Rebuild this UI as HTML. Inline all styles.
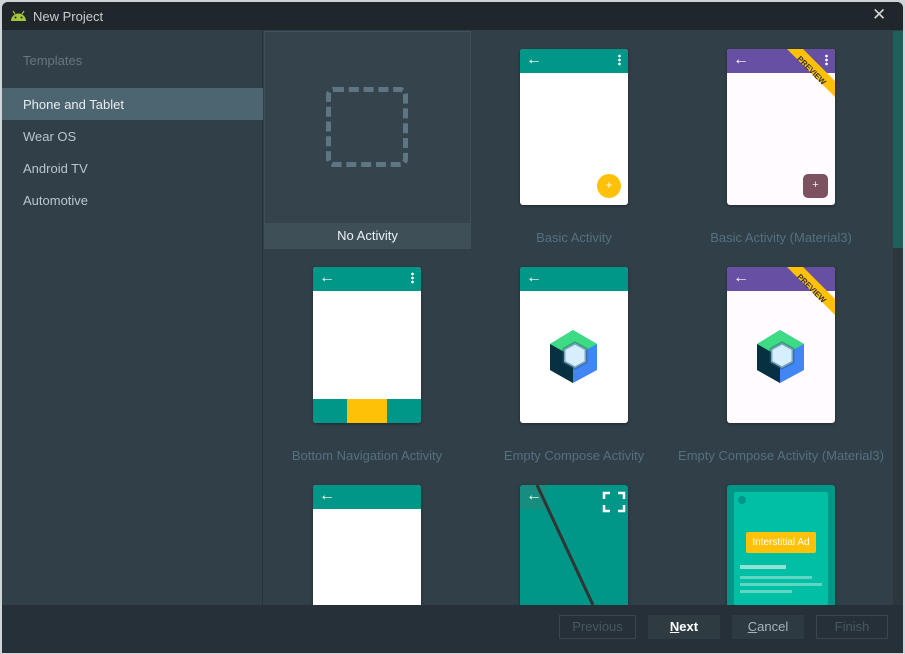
<!DOCTYPE html>
<html><head><meta charset="utf-8"><style>
*{margin:0;padding:0;box-sizing:border-box}
body{width:905px;height:654px;background:#cfd4d8;font-family:"Liberation Sans","DejaVu Sans",sans-serif;overflow:hidden;position:relative}
.win{position:absolute;left:2px;top:2px;width:901px;height:651px;background:#313f48;border-radius:6px 6px 0 0;overflow:hidden}
.title{position:absolute;left:0;top:0;width:901px;height:28px;background:#1f262c;color:#c8cdd1;font-size:13px}
.a{position:absolute}
.left{position:absolute;left:0;top:28px;width:261px;height:575px;background:#313f48;border-right:1px solid #27333a}
.item{position:absolute;left:21px;font-size:13px;color:#bcc6cc}
.sel{position:absolute;left:0;top:58px;width:261px;height:32px;background:#4d6571}
.card{position:absolute;width:108px;height:156px;background:#fff;border-radius:3px;overflow:hidden;box-shadow:0 1px 3px rgba(0,0,0,.35)}
.hdr{position:absolute;left:0;top:0;width:108px;height:24px;background:#009688}
.arr{position:absolute;left:6px;top:2px;color:#fff;font-size:16px;font-weight:bold}
.dots{position:absolute;right:7px;top:5px;width:3px;height:12px;background:radial-gradient(circle,#fff 1.2px,transparent 1.5px) 0 0/3px 4px}
.lbl{position:absolute;font-size:13px;color:#55707f;text-align:center;width:260px;white-space:nowrap}
.btn{position:absolute;top:615px;height:24px;font-size:13px;text-align:center;line-height:22px;border:1px solid #3a464e}
.pv{position:absolute;left:66px;top:17px;font-size:8px;font-weight:bold;color:#333;transform:rotate(45deg)}
</style></head><body>
<div class="win">
 <div class="title">
  <svg class="a" style="left:8px;top:8px" width="17" height="11" viewBox="0 0 17 11"><path d="M1 11 A7.5 7.5 0 0 1 16 11Z" fill="#a4c639"/><path d="M3 1 L5 4 M14 1 L12 4" stroke="#a4c639" stroke-width="1.2"/><circle cx="5.5" cy="7.5" r="1" fill="#1f262c"/><circle cx="11.5" cy="7.5" r="1" fill="#1f262c"/></svg>
  <div class="a" style="left:31px;top:7px">New Project</div>
  <div class="a" style="left:870px;top:3px;font-size:17px;color:#d0d4d8">✕</div>
 </div>
 <div class="left">
  <div class="item" style="top:23px;color:#68767e">Templates</div>
  <div class="sel"></div>
  <div class="item" style="top:67px;color:#e8eef1">Phone and Tablet</div>
  <div class="item" style="top:99px">Wear OS</div>
  <div class="item" style="top:131px">Android TV</div>
  <div class="item" style="top:163px">Automotive</div>
 </div>
 <div class="a" style="left:891px;top:29px;width:10px;height:217px;background:#1d5f5b"></div>
 <div class="a" style="left:891px;top:246px;width:10px;height:357px;background:#2b363d"></div>
 <div class="a" style="left:262px;top:29px;width:207px;height:218px;border:1px solid #3f505a;background:#34434c"></div>
 <div class="a" style="left:263px;top:221px;width:205px;height:25px;background:#3f4f58;color:#eef2f4;font-size:13px;text-align:center;line-height:25px">No Activity</div>
 <div class="a" style="left:324px;top:85px;width:82px;height:80px;border:5px dashed #5e7684;border-radius:8px"></div>
</div>
<div class="card" style="left:520px;top:49px"><div class="hdr"><span class="arr">←</span><span class="dots"></span></div>
 <div class="a" style="left:77px;top:125px;width:24px;height:24px;border-radius:50%;background:#ffc107;color:#fff;font-size:12px;text-align:center;line-height:23px">+</div></div>
<div class="lbl" style="left:444px;top:230px">Basic Activity</div>

<div class="card" style="left:727px;top:49px;background:#fffbfe"><div class="hdr" style="background:#6750a4"><span class="arr">←</span><span class="dots"></span></div>
 <div class="a" style="left:0;top:0;width:108px;height:60px;background:#ffc107;clip-path:polygon(60px 0,76px 0,108px 32px,108px 48px)"></div>
 <div class="pv">PREVIEW</div>
 <div class="a" style="left:76px;top:125px;width:25px;height:24px;border-radius:5px;background:#7d5260;color:#eee;font-size:11px;text-align:center;line-height:23px">+</div></div>
<div class="lbl" style="left:651px;top:230px">Basic Activity (Material3)</div>

<div class="card" style="left:313px;top:267px"><div class="hdr"><span class="arr">←</span><span class="dots"></span></div>
 <div class="a" style="left:0;top:132px;width:108px;height:24px;background:#009688"></div>
 <div class="a" style="left:34px;top:132px;width:40px;height:24px;background:#ffc107"></div></div>
<div class="lbl" style="left:237px;top:448px">Bottom Navigation Activity</div>

<div class="card" style="left:520px;top:267px"><div class="hdr"><span class="arr">←</span></div>
 <svg class="a" style="left:0;top:0" width="108" height="156"><polygon points="53,63 77,77 77,103 53,116 30,103 30,77" fill="#4285f4"/><polygon points="53,63 77,77 53,90 30,77" fill="#3ddc84"/><polygon points="30,77 53,90 53,116 30,103" fill="#073042"/><polygon points="55,76 66,82 66,95 55,101 44,95 44,82" fill="#d6efff" stroke="#2b5d7a" stroke-width="3" stroke-opacity=".5"/></svg></div>
<div class="lbl" style="left:444px;top:448px">Empty Compose Activity</div>

<div class="card" style="left:727px;top:267px;background:#fffbfe"><div class="hdr" style="background:#6750a4"><span class="arr">←</span></div>
 <div class="a" style="left:0;top:0;width:108px;height:60px;background:#ffc107;clip-path:polygon(60px 0,76px 0,108px 32px,108px 48px)"></div>
 <div class="pv">PREVIEW</div>
 <svg class="a" style="left:0;top:0" width="108" height="156"><polygon points="53,63 77,77 77,103 53,116 30,103 30,77" fill="#4285f4"/><polygon points="53,63 77,77 53,90 30,77" fill="#3ddc84"/><polygon points="30,77 53,90 53,116 30,103" fill="#073042"/><polygon points="55,76 66,82 66,95 55,101 44,95 44,82" fill="#d6efff" stroke="#2b5d7a" stroke-width="3" stroke-opacity=".5"/></svg></div>
<div class="lbl" style="left:651px;top:448px">Empty Compose Activity (Material3)</div>

<div class="card" style="left:313px;top:485px;height:120px;border-radius:3px 3px 0 0"><div class="hdr"><span class="arr">←</span></div></div>
<div class="card" style="left:520px;top:485px;height:120px;border-radius:3px 3px 0 0;background:#009688">
 <div class="a" style="left:0;top:0;width:26px;height:24px;background:#178d80"></div><span class="arr">←</span>
 <svg class="a" style="left:0;top:0" width="108" height="120"><line x1="17" y1="0" x2="73" y2="120" stroke="#333" stroke-width="3"/><path d="M84 14V8H90M98 8H104V14M104 20V26H98M90 26H84V20" stroke="#fff" stroke-width="2.5" fill="none"/></svg></div>
<div class="card" style="left:727px;top:485px;height:120px;border-radius:3px 3px 0 0;background:#009688">
 <div class="a" style="left:7px;top:7px;width:94px;height:113px;background:#00bfa5;border-radius:2px"></div>
 <div class="a" style="left:11px;top:11px;width:8px;height:8px;border-radius:50%;background:#009688"></div>
 <div class="a" style="left:19px;top:47px;width:70px;height:21px;background:#ffc107;border-radius:2px;color:#fff;font-size:10px;text-align:center;line-height:21px">Interstitial Ad</div>
 <div class="a" style="left:13px;top:80px;width:46px;height:4px;background:#8fe3d5"></div>
 <div class="a" style="left:13px;top:91px;width:72px;height:3px;background:#5fd6c4"></div>
 <div class="a" style="left:13px;top:98px;width:82px;height:3px;background:#5fd6c4"></div>
 <div class="a" style="left:13px;top:105px;width:52px;height:3px;background:#5fd6c4"></div></div>
<div class="a" style="left:2px;top:605px;width:901px;height:48px;background:#263038"></div>
<div class="btn" style="left:559px;width:77px;color:#4a5860">Previous</div>
<div class="btn" style="left:648px;width:72px;background:#2e3c42;border-color:#2e3c42;color:#fff;font-weight:bold"><u>N</u>ext</div>
<div class="btn" style="left:732px;width:72px;background:#2e3a41;border-color:#2e3a41;color:#a8b3b9"><u>C</u>ancel</div>
<div class="btn" style="left:816px;width:72px;color:#4a5860">Finish</div>
</body></html>
